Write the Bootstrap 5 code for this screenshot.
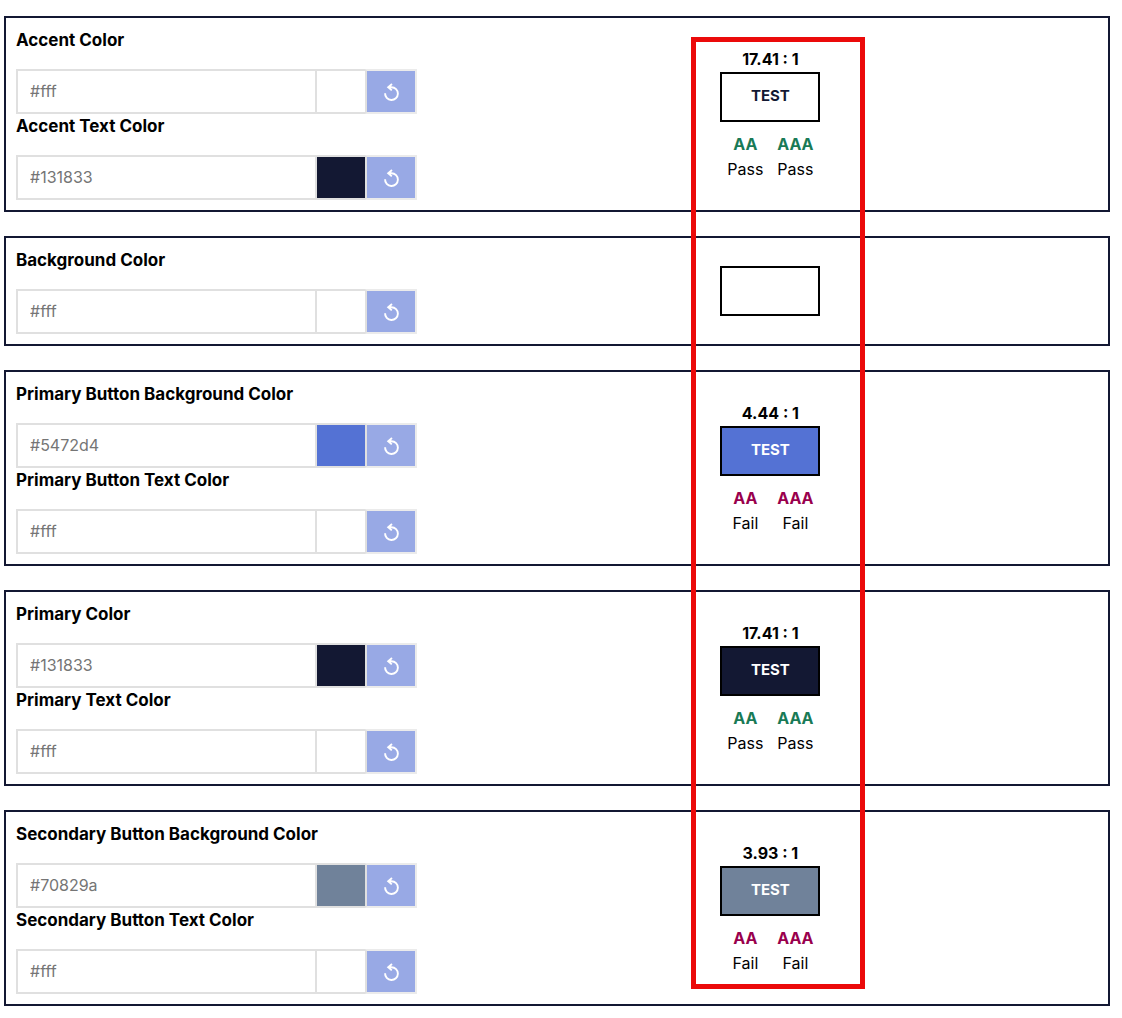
<!DOCTYPE html>
<html lang="en">
<head>
<meta charset="utf-8">
<meta name="viewport" content="width=device-width, initial-scale=1">
<title>Theme colors</title>
<link href="https://cdn.jsdelivr.net/npm/bootstrap@5.3.0/dist/css/bootstrap.min.css" rel="stylesheet">
<style>
body{font-family:Inter,"Open Sans",sans-serif;font-size:16px;line-height:24px;color:#000;background:#fff}
.theme-list{margin:16px 12px 12px 4px;gap:24px}
.theme-panel{border:2px solid #131833;padding:10px}
.fields{flex:0 0 65.1%}
.field-label{font-size:17px;font-weight:700;margin-bottom:17px}
.color-row{width:401px;height:45px}
.color-row .form-control{border:2px solid #e0e0e0;border-right:0;border-radius:0;padding:0 12px 2px;color:#757575;background:#fff;font-size:16px}
.swatch{flex:0 0 50px;border:2px solid #e0e0e0;border-right:0}
.reset-btn{flex:0 0 52px;border:2px solid #ebebeb;border-left-color:#e0e0e0;border-radius:0;background:#98a9e5;color:#fff}
.reset-btn svg{display:block;margin:auto}
.preview{width:100px;line-height:25px}
.test-box{width:100px;height:50px;border:2px solid #000;padding-bottom:2px;font-size:15px}
.grades{margin-top:10px}
.pass b{color:#197a56}
.fail b{color:#99004d}
.highlight{left:calc(65.1% - 33px);top:21px;bottom:17px;width:174px;border:5px solid #eb0a0a}
.c-white{background:#fff;color:#131833}
.c-navy{background:#131833;color:#fff}
.c-blue{background:#5472d4;color:#fff}
.c-slate{background:#70829a;color:#fff}
</style>
<script src="https://cdn.jsdelivr.net/npm/bootstrap@5.3.0/dist/js/bootstrap.bundle.min.js"></script>
</head>
<body>
<svg class="d-none" aria-hidden="true"><symbol id="reset" viewBox="0 0 20 20"><path d="M4.1 11.2A6.4 6.4 0 1 0 10.5 5.2H7.2M11 2 7.2 5.2 10.8 8.4" fill="none" stroke="currentColor" stroke-width="1.9"/></symbol></svg>
<main class="theme-list d-flex flex-column position-relative">

<section class="theme-panel d-flex align-items-center">
<div class="fields">
<label class="field-label d-block" for="f1">Accent Color</label>
<div class="color-row d-flex"><input class="form-control" id="f1" value="#fff"><span class="swatch c-white"></span><button class="reset-btn btn p-0" type="button" aria-label="Reset"><svg width="20" height="20"><use href="#reset"/></svg></button></div>
<label class="field-label d-block" for="f2">Accent Text Color</label>
<div class="color-row d-flex"><input class="form-control" id="f2" value="#131833"><span class="swatch c-navy"></span><button class="reset-btn btn p-0" type="button" aria-label="Reset"><svg width="20" height="20"><use href="#reset"/></svg></button></div>
</div>
<div class="preview text-center">
<div class="fw-bold">17.41 : 1</div>
<div class="test-box c-white fw-bold d-flex align-items-center justify-content-center">TEST</div>
<div class="grades pass d-flex"><div class="w-50"><b>AA</b><div>Pass</div></div><div class="w-50"><b>AAA</b><div>Pass</div></div></div>
</div>
</section>

<section class="theme-panel d-flex align-items-center">
<div class="fields">
<label class="field-label d-block" for="f3">Background Color</label>
<div class="color-row d-flex"><input class="form-control" id="f3" value="#fff"><span class="swatch c-white"></span><button class="reset-btn btn p-0" type="button" aria-label="Reset"><svg width="20" height="20"><use href="#reset"/></svg></button></div>
</div>
<div class="preview"><div class="test-box c-white"></div></div>
</section>

<section class="theme-panel d-flex align-items-center">
<div class="fields">
<label class="field-label d-block" for="f4">Primary Button Background Color</label>
<div class="color-row d-flex"><input class="form-control" id="f4" value="#5472d4"><span class="swatch c-blue"></span><button class="reset-btn btn p-0" type="button" aria-label="Reset"><svg width="20" height="20"><use href="#reset"/></svg></button></div>
<label class="field-label d-block" for="f5">Primary Button Text Color</label>
<div class="color-row d-flex"><input class="form-control" id="f5" value="#fff"><span class="swatch c-white"></span><button class="reset-btn btn p-0" type="button" aria-label="Reset"><svg width="20" height="20"><use href="#reset"/></svg></button></div>
</div>
<div class="preview text-center">
<div class="fw-bold">4.44 : 1</div>
<div class="test-box c-blue fw-bold d-flex align-items-center justify-content-center">TEST</div>
<div class="grades fail d-flex"><div class="w-50"><b>AA</b><div>Fail</div></div><div class="w-50"><b>AAA</b><div>Fail</div></div></div>
</div>
</section>

<section class="theme-panel d-flex align-items-center">
<div class="fields">
<label class="field-label d-block" for="f6">Primary Color</label>
<div class="color-row d-flex"><input class="form-control" id="f6" value="#131833"><span class="swatch c-navy"></span><button class="reset-btn btn p-0" type="button" aria-label="Reset"><svg width="20" height="20"><use href="#reset"/></svg></button></div>
<label class="field-label d-block" for="f7">Primary Text Color</label>
<div class="color-row d-flex"><input class="form-control" id="f7" value="#fff"><span class="swatch c-white"></span><button class="reset-btn btn p-0" type="button" aria-label="Reset"><svg width="20" height="20"><use href="#reset"/></svg></button></div>
</div>
<div class="preview text-center">
<div class="fw-bold">17.41 : 1</div>
<div class="test-box c-navy fw-bold d-flex align-items-center justify-content-center">TEST</div>
<div class="grades pass d-flex"><div class="w-50"><b>AA</b><div>Pass</div></div><div class="w-50"><b>AAA</b><div>Pass</div></div></div>
</div>
</section>

<section class="theme-panel d-flex align-items-center">
<div class="fields">
<label class="field-label d-block" for="f8">Secondary Button Background Color</label>
<div class="color-row d-flex"><input class="form-control" id="f8" value="#70829a"><span class="swatch c-slate"></span><button class="reset-btn btn p-0" type="button" aria-label="Reset"><svg width="20" height="20"><use href="#reset"/></svg></button></div>
<label class="field-label d-block" for="f9">Secondary Button Text Color</label>
<div class="color-row d-flex"><input class="form-control" id="f9" value="#fff"><span class="swatch c-white"></span><button class="reset-btn btn p-0" type="button" aria-label="Reset"><svg width="20" height="20"><use href="#reset"/></svg></button></div>
</div>
<div class="preview text-center">
<div class="fw-bold">3.93 : 1</div>
<div class="test-box c-slate fw-bold d-flex align-items-center justify-content-center">TEST</div>
<div class="grades fail d-flex"><div class="w-50"><b>AA</b><div>Fail</div></div><div class="w-50"><b>AAA</b><div>Fail</div></div></div>
</div>
</section>

<div class="highlight position-absolute pe-none"></div>
</main>
</body>
</html>
